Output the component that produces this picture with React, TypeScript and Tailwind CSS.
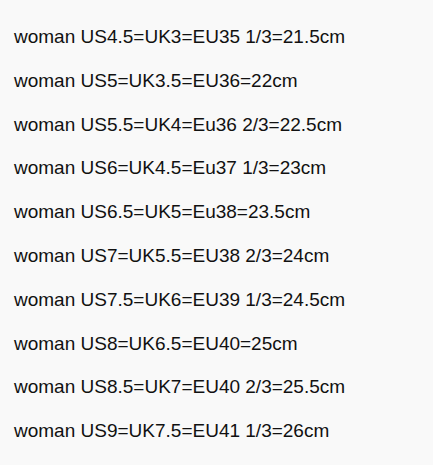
import React from "react";

const lines = [
  "woman US4.5=UK3=EU35 1/3=21.5cm",
  "woman US5=UK3.5=EU36=22cm",
  "woman US5.5=UK4=Eu36 2/3=22.5cm",
  "woman US6=UK4.5=Eu37 1/3=23cm",
  "woman US6.5=UK5=Eu38=23.5cm",
  "woman US7=UK5.5=EU38 2/3=24cm",
  "woman US7.5=UK6=EU39 1/3=24.5cm",
  "woman US8=UK6.5=EU40=25cm",
  "woman US8.5=UK7=EU40 2/3=25.5cm",
  "woman US9=UK7.5=EU41 1/3=26cm",
];

export default function App() {
  return (
    <div className="w-[433px] h-[465px] bg-[#f9f9f9] pt-[15px] pl-[14px] flex flex-col text-[19px] leading-[43.8px] text-[#111111] font-['Liberation_Sans',Arial,sans-serif]">
      {lines.map((l) => (
        <div key={l} className="whitespace-nowrap">{l}</div>
      ))}
    </div>
  );
}
